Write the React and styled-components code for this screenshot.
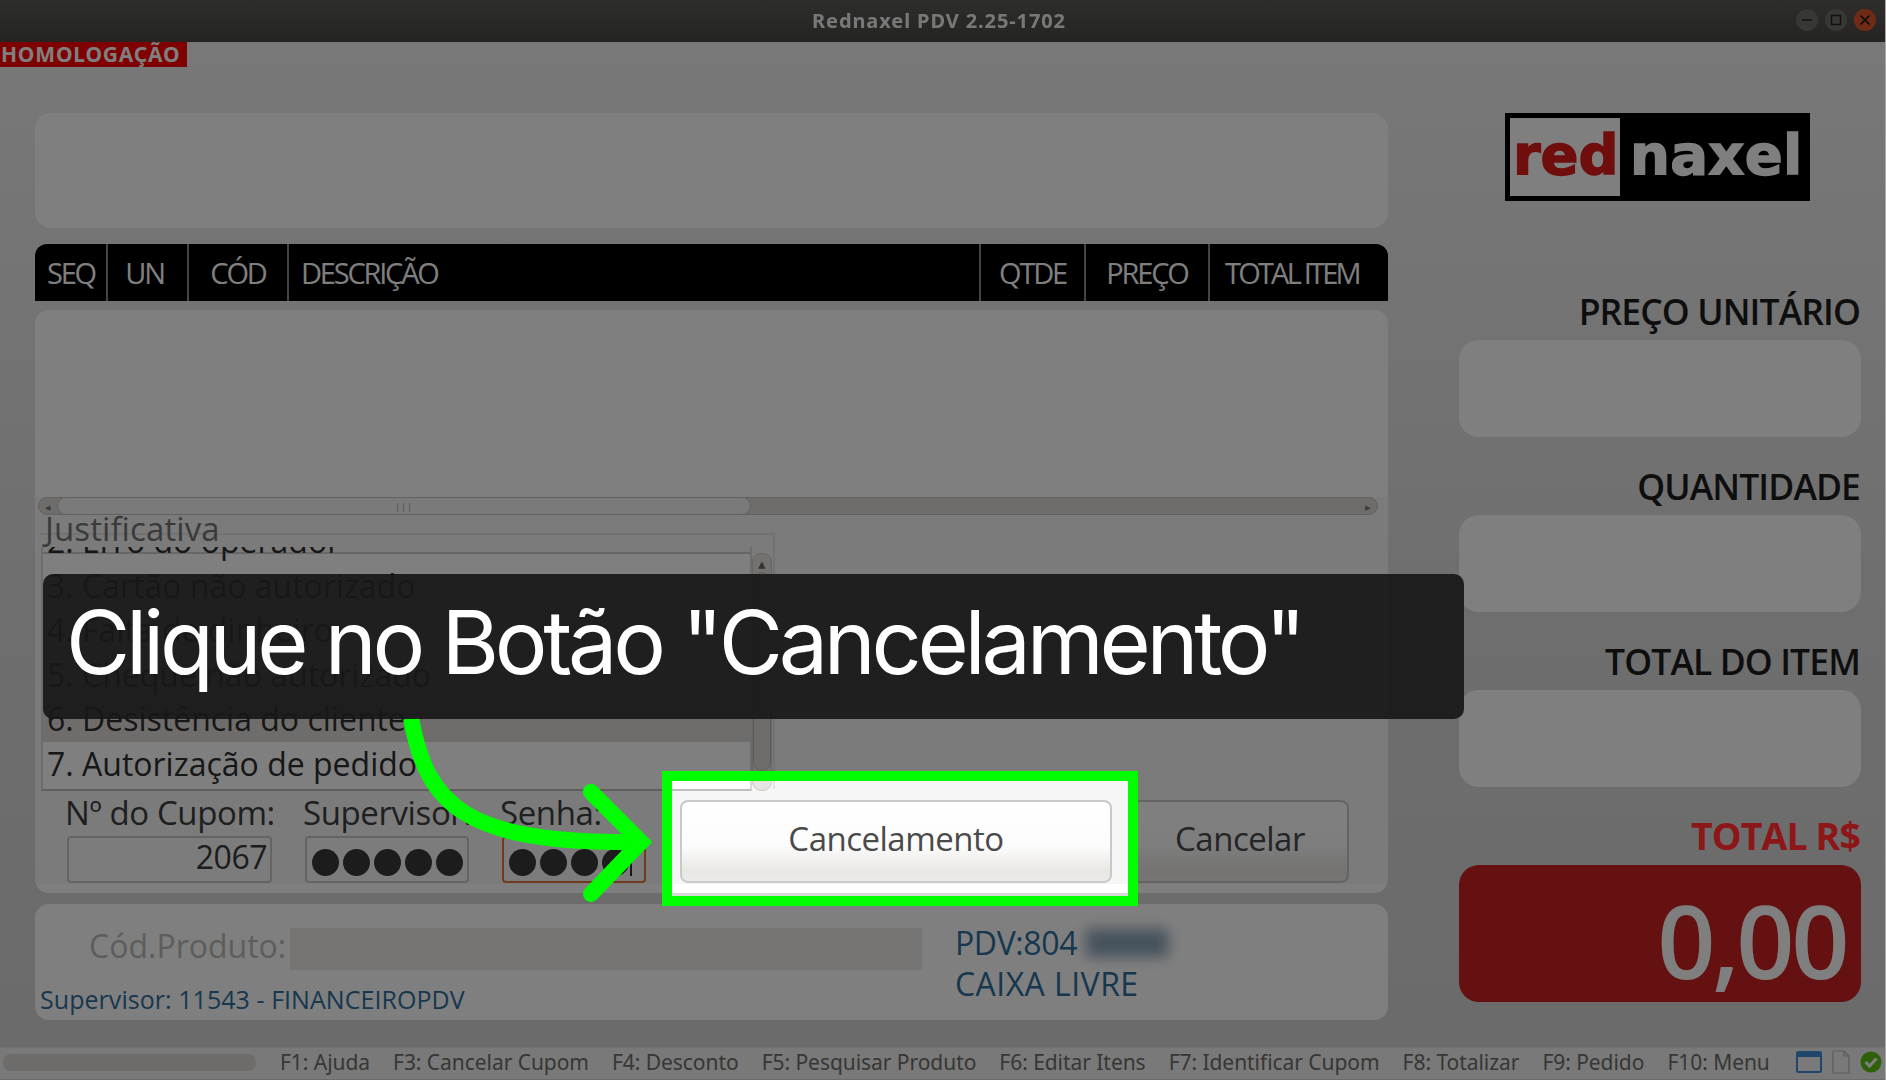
// Rednaxel PDV - cancel dialog tutorial frame

import React from 'react';
import styled, { createGlobalStyle } from 'styled-components';

const GlobalStyle = createGlobalStyle`
    html, body {
        margin: 0;
        padding: 0;
        background: #d8d8d8;
        overflow: hidden;
    }
    * {
        box-sizing: border-box;
    }
`;

const columns = [
    { label: 'SEQ', width: 73 },
    { label: 'UN', width: 81, center: true },
    { label: 'CÓD', width: 100, center: true },
    { label: 'DESCRIÇÃO', width: 692 },
    { label: 'QTDE', width: 105, center: true },
    { label: 'PREÇO', width: 124, center: true },
    { label: 'TOTAL ITEM', width: 178 },
];

const reasons = [
    { label: '2. Erro do operador' },
    { label: '3. Cartão não autorizado' },
    { label: '4. Falta de dinheiro' },
    { label: '5. Cheque não autorizado' },
    { label: '6. Desistência do cliente', selected: true },
    { label: '7. Autorização de pedido' },
];

const shortcuts = [
    'F1: Ajuda',
    'F3: Cancelar Cupom',
    'F4: Desconto',
    'F5: Pesquisar Produto',
    'F6: Editar Itens',
    'F7: Identificar Cupom',
    'F8: Totalizar',
    'F9: Pedido',
    'F10: Menu',
];

const App = () => {
    return (
        <Screen>
            <GlobalStyle />
            <TitleBar>
                <WindowTitle>Rednaxel PDV 2.25-1702</WindowTitle>
                <WindowButtons>
                    <WindowButton>
                        <svg width="12" height="12" viewBox="0 0 12 12"><path d="M1 6h10" stroke="#222" strokeWidth="1.5" /></svg>
                    </WindowButton>
                    <WindowButton>
                        <svg width="12" height="12" viewBox="0 0 12 12"><rect x="1.5" y="1.5" width="9" height="9" fill="none" stroke="#222" strokeWidth="1.5" /></svg>
                    </WindowButton>
                    <WindowButton $close>
                        <svg width="12" height="12" viewBox="0 0 12 12"><path d="M1.5 1.5l9 9M10.5 1.5l-9 9" stroke="#111" strokeWidth="1.6" /></svg>
                    </WindowButton>
                </WindowButtons>
            </TitleBar>

            <Badge>HOMOLOGAÇÃO</Badge>

            <Columns>
                <LeftColumn>
                    <TopPanel />
                    <GridHeader>
                        {columns.map((col) => (
                            <HeaderCell key={col.label} $width={col.width} $center={col.center}>{col.label}</HeaderCell>
                        ))}
                    </GridHeader>
                    <DialogPanel>
                        <TableArea />
                        <HScroll>
                            <ScrollArrow>◂</ScrollArrow>
                            <HThumb>
                                <Grip>|||</Grip>
                            </HThumb>
                            <ScrollArrow $right>▸</ScrollArrow>
                        </HScroll>
                        <Legend>Justificativa</Legend>
                        <Group>
                            <ReasonList>
                                {reasons.map((reason) => (
                                    <Reason key={reason.label} $selected={reason.selected}>{reason.label}</Reason>
                                ))}
                            </ReasonList>
                            <VScroll>
                                <VArrow>▴</VArrow>
                                <VThumb />
                            </VScroll>
                        </Group>
                        <DialogFooter>
                            <Field $width={205}>
                                <FieldLabel>Nº do Cupom:</FieldLabel>
                                <Input $right>2067</Input>
                            </Field>
                            <Field $width={164}>
                                <FieldLabel>Supervisor:</FieldLabel>
                                <Input>
                                    <Dot /><Dot /><Dot /><Dot /><Dot />
                                </Input>
                            </Field>
                            <Field $width={144}>
                                <FieldLabel>Senha:</FieldLabel>
                                <Input $focused>
                                    <Dot /><Dot /><Dot /><Dot />
                                    <Caret />
                                </Input>
                            </Field>
                            <ActionButton $width={432}>Cancelamento</ActionButton>
                            <ActionButton $width={218}>Cancelar</ActionButton>
                        </DialogFooter>
                    </DialogPanel>
                    <BottomPanel>
                        <ProductRow>
                            <ProductLabel>Cód.Produto:</ProductLabel>
                            <ProductInput />
                        </ProductRow>
                        <SupervisorLine>Supervisor: 11543 - FINANCEIROPDV</SupervisorLine>
                        <PdvInfo>
                            <PdvLine $spacing={-0.4}>PDV:804<BlurPatch /></PdvLine>
                            <PdvLine $spacing={0.45}>CAIXA LIVRE</PdvLine>
                        </PdvInfo>
                    </BottomPanel>
                </LeftColumn>

                <RightColumn>
                    <Logo>
                        <LogoRed>red</LogoRed>
                        <LogoNaxel>naxel</LogoNaxel>
                    </Logo>
                    <Summary>
                        <SummaryLabel>PREÇO UNITÁRIO</SummaryLabel>
                        <SummaryBox />
                    </Summary>
                    <Summary>
                        <SummaryLabel>QUANTIDADE</SummaryLabel>
                        <SummaryBox />
                    </Summary>
                    <Summary>
                        <SummaryLabel>TOTAL DO ITEM</SummaryLabel>
                        <SummaryBox />
                    </Summary>
                    <Summary>
                        <SummaryLabel $red>TOTAL R$</SummaryLabel>
                        <TotalBox>0,00</TotalBox>
                    </Summary>
                </RightColumn>
            </Columns>

            <StatusBar>
                <Progress />
                <Shortcuts>
                    {shortcuts.map((item) => (
                        <span key={item}>{item}</span>
                    ))}
                </Shortcuts>
                <StatusIcons>
                    <svg width="26" height="22" viewBox="0 0 26 22">
                        <rect x="1" y="1" width="24" height="20" rx="1.5" fill="#f4f4f4" stroke="#3f8fd6" strokeWidth="2" />
                        <rect x="1" y="1" width="24" height="5" fill="#3f8fd6" />
                    </svg>
                    <svg width="20" height="24" viewBox="0 0 20 24">
                        <path d="M2 1h11l5 5v17H2z" fill="#f2f2f2" stroke="#b8b8b8" strokeWidth="1.2" />
                        <path d="M13 1v5h5" fill="none" stroke="#b8b8b8" strokeWidth="1.2" />
                    </svg>
                    <svg width="22" height="22" viewBox="0 0 22 22">
                        <circle cx="11" cy="11" r="10.5" fill="#5fc21a" />
                        <path d="M5.5 11l4 4 7-7.5" fill="none" stroke="#fff" strokeWidth="3" />
                    </svg>
                </StatusIcons>
            </StatusBar>

            {/* Tutorial layer over the app */}
            <Highlight />
            <Arrow viewBox="0 0 260 190" width="260" height="190">
                <path d="M8 2C24 92 66 126 226 126" fill="none" stroke="#00ff00" strokeWidth="16" />
                <path d="M188 76L238 126L188 178" fill="none" stroke="#00ff00" strokeWidth="16" strokeLinecap="round" strokeLinejoin="miter" />
            </Arrow>
            <Caption>Clique no Botão "Cancelamento"</Caption>
        </Screen>
    );
};

const appFont = `"Open Sans", "Noto Sans", sans-serif`;

const Screen = styled.div`
    position: relative;
    width: 1886px;
    height: 1080px;
    overflow: hidden;
    display: flex;
    flex-direction: column;
    font-family: ${appFont};
    background: linear-gradient(#f2f2f2, #dcdcdc 60%, #d6d6d6);
    border-right: 1px solid #aaa;
`;

const TitleBar = styled.div`
    position: relative;
    flex: 0 0 42px;
    display: flex;
    align-items: center;
    justify-content: center;
    padding: 0 7px 2px 0;
    background: linear-gradient(#5c5b56, #494844);
`;

const WindowTitle = styled.div`
    color: #fff;
    font: 700 20px "Noto Sans", sans-serif;
    letter-spacing: 0.9px;
    opacity: 0.92;
`;

const WindowButtons = styled.div`
    position: absolute;
    right: 9px;
    top: 9px;
    display: flex;
    gap: 7px;
`;

const WindowButton = styled.div`
    width: 22px;
    height: 22px;
    border-radius: 50%;
    display: flex;
    align-items: center;
    justify-content: center;
    background: ${(p) => (p.$close ? '#e0562a' : '#6f6e69')};
`;

const Badge = styled.div`
    flex: 0 0 25px;
    width: 187px;
    background: #ff0000;
    color: #fff;
    font: 700 21px/25px "Noto Sans", sans-serif;
    letter-spacing: 0.8px;
    padding-left: 1px;
    white-space: nowrap;
`;

const Columns = styled.div`
    flex: 0 0 953px;
    display: flex;
    padding: 46px 0 0 35px;
`;

const LeftColumn = styled.div`
    width: 1353px;
    display: flex;
    flex-direction: column;
`;

const TopPanel = styled.div`
    height: 115px;
    background: #fff;
    border-radius: 16px;
`;

const GridHeader = styled.div`
    margin-top: 16px;
    height: 57px;
    display: flex;
    background: #000;
    border-radius: 12px 12px 0 0;
`;

const HeaderCell = styled.div`
    width: ${(p) => p.$width}px;
    padding-left: ${(p) => (p.$center ? 0 : 12)}px;
    display: flex;
    align-items: center;
    justify-content: ${(p) => (p.$center ? 'center' : 'flex-start')};
    color: #fff;
    font-size: 29px;
    letter-spacing: -2.2px;
    border-right: 2px solid #888;
    &:nth-child(2) {
        padding-right: 6px;
    }
    &:last-child {
        border-right: 0;
        padding-left: 15px;
        letter-spacing: -2.8px;
    }
`;

const DialogPanel = styled.div`
    margin-top: 9px;
    height: 583px;
    border-radius: 14px;
    display: flex;
    flex-direction: column;
    overflow: hidden;
    background: linear-gradient(#f6f6f6 calc(100% - 9px), #fff 0);
`;

const TableArea = styled.div`
    height: 187px;
    background: #fff;
`;

const HScroll = styled.div`
    height: 18px;
    margin: 0 10px 0 3px;
    background: #dcdad7;
    border: 1px solid #c4c2bf;
    border-radius: 9px;
    display: flex;
    align-items: center;
    color: #777;
    font-size: 11px;
`;

const ScrollArrow = styled.span`
    width: 18px;
    text-align: center;
    margin-left: ${(p) => (p.$right ? 'auto' : '0')};
`;

const HThumb = styled.div`
    width: 694px;
    height: 18px;
    background: #f4f4f4;
    border: 1px solid #c4c2bf;
    border-radius: 9px;
    display: flex;
    align-items: center;
    justify-content: center;
`;

const Grip = styled.span`
    font-size: 9px;
    letter-spacing: 1px;
    color: #999;
`;

const Legend = styled.div`
    height: 18px;
    padding-left: 10px;
    font-size: 33px;
    line-height: 28px;
    letter-spacing: 0.1px;
    color: #3a3a3a;
    position: relative;
    z-index: 1;
`;

const Group = styled.div`
    width: 735px;
    height: 256px;
    margin-left: 5px;
    padding: 12px 0 0 1px;
    display: flex;
    align-items: flex-start;
    border-top: 2px solid #e4e4e4;
    border-right: 2px solid #e4e4e4;
`;

/* the frame line runs a little below the clipped top of the list, as in the app */
const ReasonList = styled.div`
    width: 711px;
    height: 244px;
    background: linear-gradient(transparent 5px, #cfcfcf 5px, #cfcfcf 7px, #fff 7px);
    border: 2px solid #d8d8d8;
    border-top: 0;
    border-bottom-color: #bdbdbd;
    overflow: hidden;
`;

const Reason = styled.div`
    height: 44.6px;
    padding: 0 0 0 4px;
    font-size: 32px;
    line-height: 44px;
    color: #2e2e2e;
    white-space: nowrap;
    background: ${(p) => (p.$selected ? '#dedbd8' : 'transparent')};
    &:first-child {
        margin-top: -28px;
    }
`;

const VScroll = styled.div`
    width: 20px;
    height: 238px;
    margin-top: 6px;
    background: #e6e4e1;
    border: 1px solid #cfcdca;
    border-radius: 9px;
    display: flex;
    flex-direction: column;
    align-items: center;
    color: #666;
    font-size: 15px;
`;

const VArrow = styled.span`
    height: 18px;
    line-height: 18px;
`;

const VThumb = styled.div`
    width: 18px;
    height: 199px;
    background: #dddbd8;
    border: 1px solid #bdbbb8;
    border-radius: 9px;
`;

const DialogFooter = styled.div`
    flex: 1;
    padding: 11px 0 0 32px;
    display: flex;
    align-items: flex-start;
    gap: 33px;
`;

const Field = styled.div`
    width: ${(p) => p.$width}px;
    display: flex;
    flex-direction: column;
`;

const FieldLabel = styled.div`
    height: 36px;
    margin-left: -2px;
    font-size: 33px;
    line-height: 26px;
    letter-spacing: -0.4px;
    color: #3f3f3f;
    white-space: nowrap;
`;

const Input = styled.div`
    height: 47px;
    background: #f8f8f8;
    border: 2px solid ${(p) => (p.$focused ? '#e2763f' : '#c8c8c8')};
    border-radius: 4px;
    display: flex;
    align-items: center;
    justify-content: ${(p) => (p.$right ? 'flex-end' : 'flex-start')};
    padding: ${(p) => (p.$right ? '0 3px 6px 0' : '5px 0 0 5px')};
    gap: 4px;
    font-size: 32px;
    letter-spacing: -0.5px;
    color: #3a3a3a;
`;

const Dot = styled.span`
    flex: 0 0 27px;
    height: 27px;
    border-radius: 50%;
    background: #383838;
`;

const Caret = styled.span`
    width: 2px;
    height: 28px;
    margin-left: -3px;
    background: #333;
`;

const ActionButton = styled.div`
    width: ${(p) => p.$width}px;
    height: 83px;
    flex: none;
    margin-left: ${(p) => (p.$width === 218 ? '-14px' : '1px')};
    padding-bottom: 6px;
    display: flex;
    align-items: center;
    justify-content: center;
    border: 2px solid #cbc9c6;
    border-radius: 8px;
    background: linear-gradient(#fff 0%, #fcfcfc 55%, #e9e7e4 88%, #eeecea 100%);
    color: #4a4a4a;
    font-size: 33px;
    letter-spacing: -0.5px;
`;

const BottomPanel = styled.div`
    position: relative;
    margin-top: 11px;
    height: 116px;
    background: #fff;
    border-radius: 14px;
`;

const ProductRow = styled.div`
    display: flex;
    align-items: flex-start;
    padding: 24px 0 0 54px;
`;

const ProductLabel = styled.div`
    width: 201px;
    font-size: 32px;
    color: #bdbbb8;
    line-height: 36px;
    white-space: nowrap;
`;

const ProductInput = styled.div`
    width: 632px;
    height: 42px;
    background: #ecebe8;
`;

const SupervisorLine = styled.div`
    padding: 14px 0 0 5px;
    font-size: 25px;
    line-height: 30px;
    letter-spacing: 0.05px;
    color: #2f6f9f;
    white-space: nowrap;
`;

const PdvInfo = styled.div`
    position: absolute;
    left: 920px;
    top: 18px;
`;

const PdvLine = styled.div`
    display: flex;
    align-items: center;
    height: 41px;
    font-size: 32px;
    letter-spacing: ${(p) => p.$spacing}px;
    color: #2f6f9f;
    white-space: nowrap;
`;

const BlurPatch = styled.span`
    width: 82px;
    height: 28px;
    margin-left: 9px;
    background: #8ba3b8;
    filter: blur(7px);
`;

const RightColumn = styled.div`
    width: 402px;
    margin-left: 71px;
    display: flex;
    flex-direction: column;
    gap: 38px;
`;

const Logo = styled.div`
    width: 305px;
    height: 88px;
    margin: 0 0 61px 46px;
    padding: 5px;
    background: #000;
    display: flex;
    align-items: stretch;
    font: 700 56px "DejaVu Sans", sans-serif;
    -webkit-text-stroke: 1.5px currentColor;
`;

const LogoRed = styled.div`
    width: 110px;
    background: #fff;
    color: #e01c1c;
    line-height: 74px;
    padding-left: 3px;
`;

const LogoNaxel = styled.div`
    flex: 1;
    color: #fff;
    line-height: 74px;
    padding-left: 10px;
    letter-spacing: 0.3px;
`;

const Summary = styled.div`
    display: flex;
    flex-direction: column;
`;

const SummaryLabel = styled.div`
    height: 40px;
    text-align: right;
    padding-right: 1px;
    font-size: 35.5px;
    font-weight: 600;
    line-height: 22px;
    letter-spacing: -0.9px;
    white-space: nowrap;
    color: #1c1c1c;
    ${(p) => p.$red && `
        /* brighter than the dim layer lets through */
        position: relative;
        z-index: 1;
        font-size: 37.5px;
        font-weight: 700;
        color: #8c1618;
    `}
`;

const SummaryBox = styled.div`
    height: 97px;
    background: #fff;
    border-radius: 20px;
`;

const TotalBox = styled.div`
    height: 137px;
    background: #cb2022;
    border-radius: 20px;
    color: #fff;
    font-size: 102px;
    font-weight: 600;
    letter-spacing: -3.5px;
    line-height: 150px;
    text-align: right;
    padding-right: 15px;
`;

const StatusBar = styled.div`
    flex: 0 0 30px;
    margin-top: 27px;
    display: flex;
    align-items: center;
    background: #f2f2f2;
    padding: 0 3px 3px 3px;
    border-top: 1px solid #e4e4e4;
`;

const Progress = styled.div`
    width: 253px;
    height: 17px;
    background: #dbd9d6;
    border-radius: 8px;
`;

const Shortcuts = styled.div`
    margin-left: 24px;
    display: flex;
    gap: 23px;
    font: 400 21px "Noto Sans", sans-serif;
    letter-spacing: -0.05px;
    color: #6e6e6a;
    white-space: nowrap;
`;

const StatusIcons = styled.div`
    margin-left: auto;
    display: flex;
    align-items: center;
    gap: 9px;
`;

const Highlight = styled.div`
    position: absolute;
    left: 662px;
    top: 771px;
    width: 476px;
    height: 135px;
    border: 10px solid #00ff00;
    box-shadow: 0 0 0 2200px rgba(0, 0, 0, 0.5);
`;

const Caption = styled.div`
    position: absolute;
    left: 43px;
    top: 574px;
    width: 1421px;
    height: 145px;
    padding: 0 0 10px 23px;
    display: flex;
    align-items: center;
    background: rgba(24, 24, 24, 0.925);
    border-radius: 10px;
    color: #fff;
    font: 400 88px Inter, sans-serif;
    letter-spacing: -4.3px;
    white-space: nowrap;
`;

const Arrow = styled.svg`
    position: absolute;
    left: 403px;
    top: 716px;
`;

export default App;
